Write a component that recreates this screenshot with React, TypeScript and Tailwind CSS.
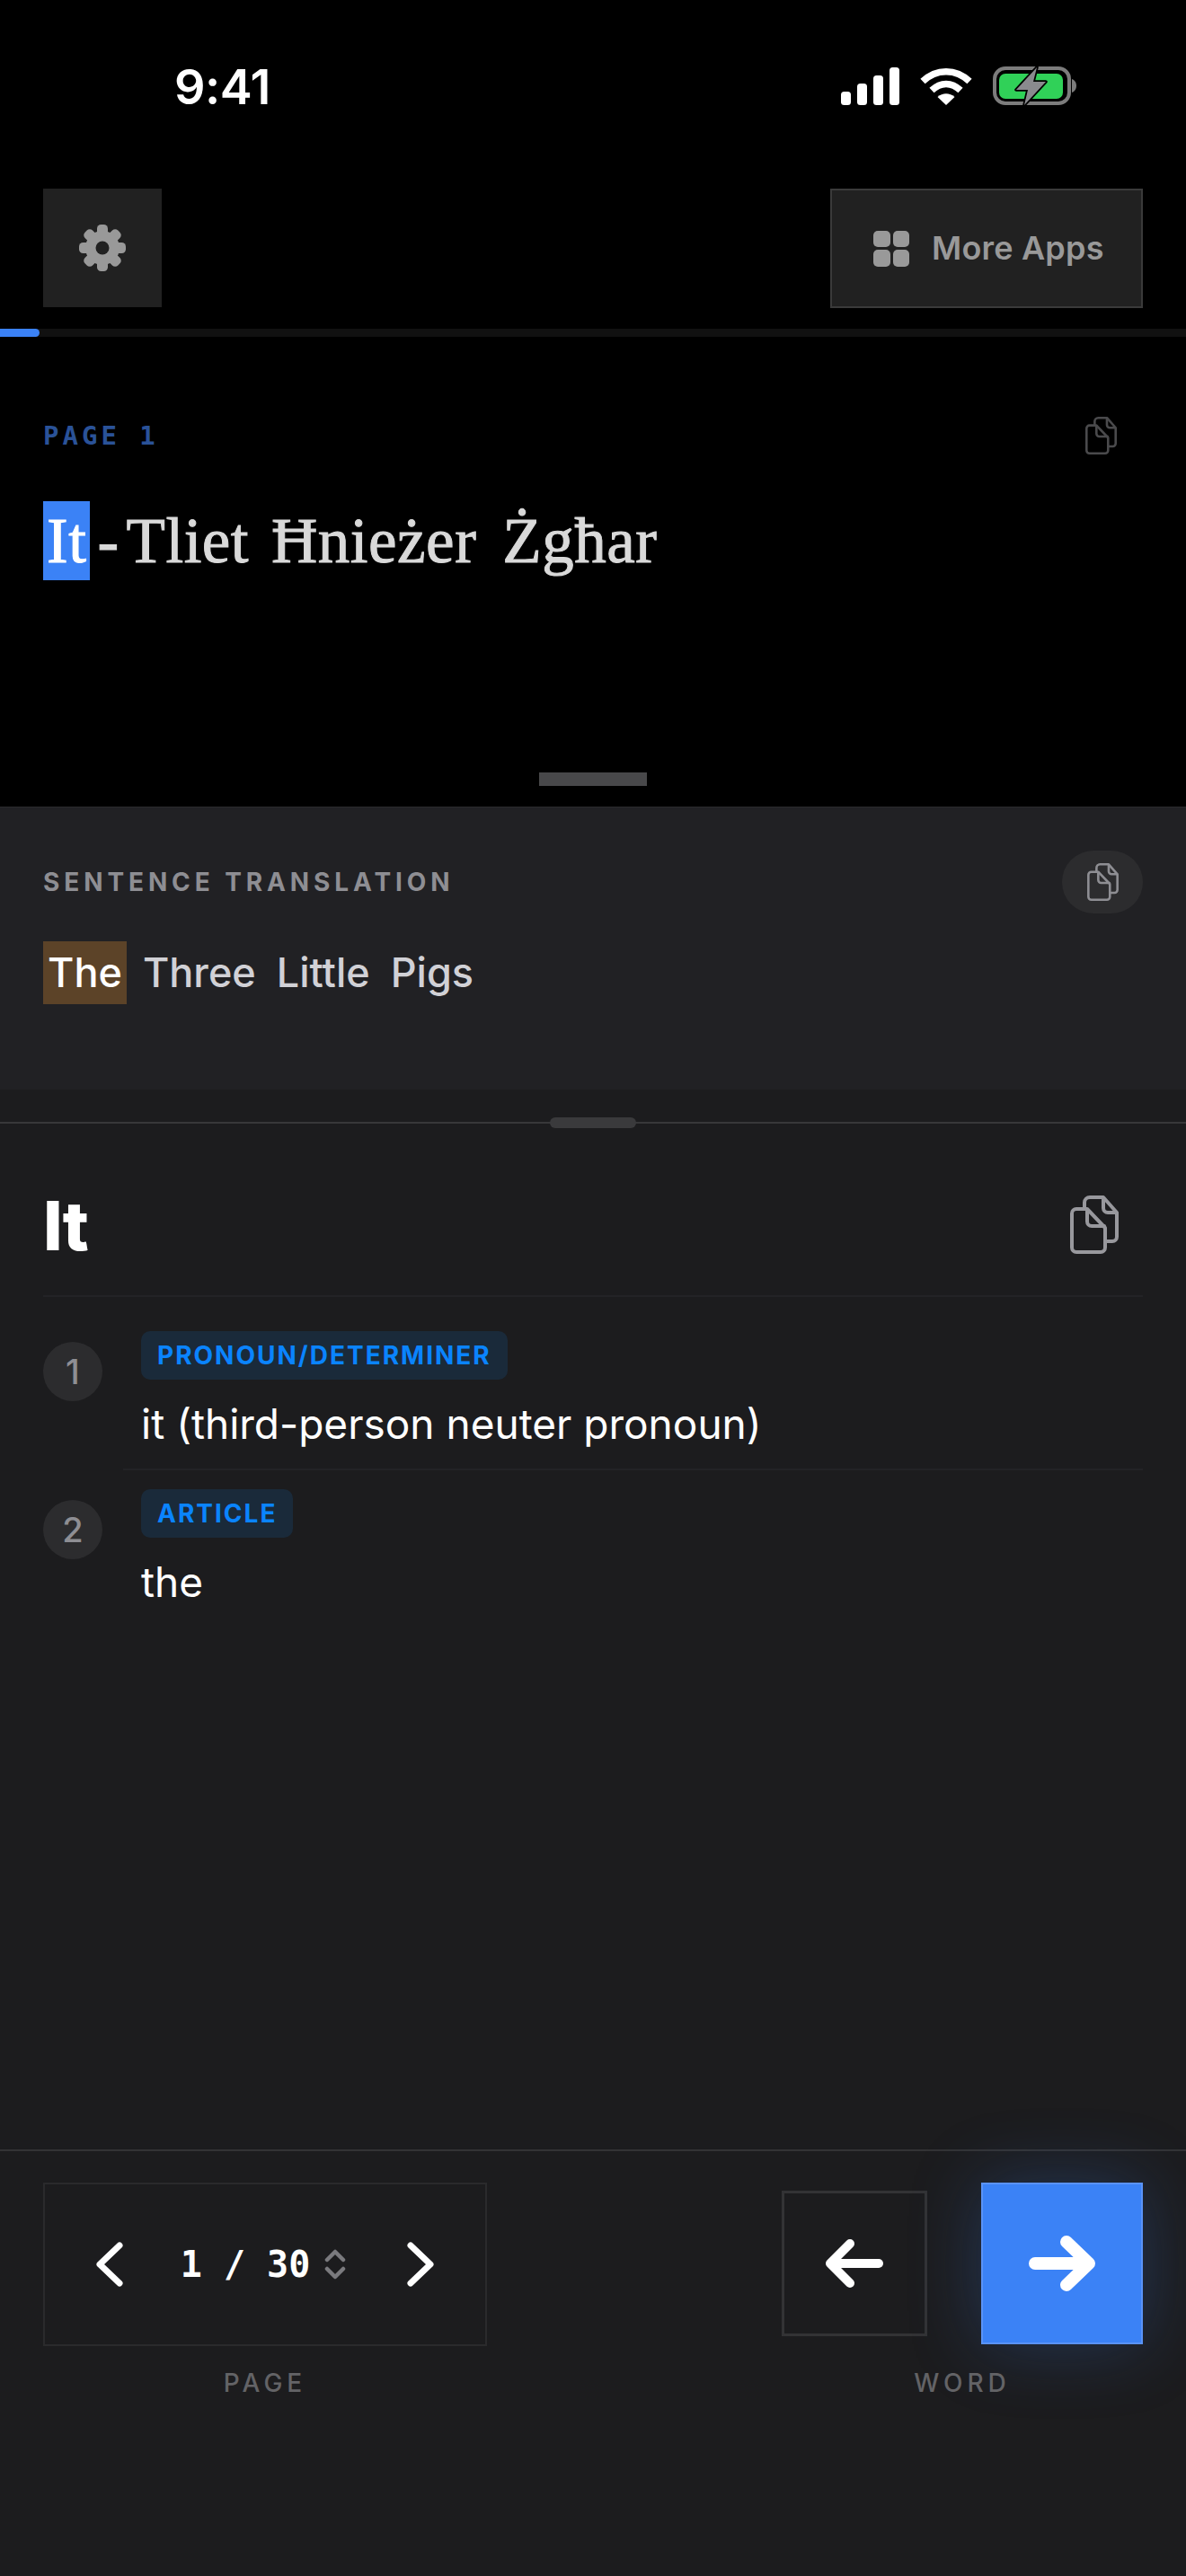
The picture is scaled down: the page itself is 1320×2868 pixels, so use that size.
import React from 'react';

const FilesIcon: React.FC<{ className?: string }> = ({ className }) => (
  <svg viewBox="0 0 54 65" fill="none" stroke="currentColor" strokeWidth="4" strokeLinecap="round" strokeLinejoin="round" className={className}>
    <path d="M16 15V8a6 6 0 0 1 6-6h15l15 17v27a5 5 0 0 1-5 5h-8" />
    <path d="M37 3v11a5 5 0 0 0 5 5h9" />
    <path d="M7 15h12l20 21v22a5 5 0 0 1-5 5H7a5 5 0 0 1-5-5V20a5 5 0 0 1 5-5Z" />
    <path d="M19 16v13a5 5 0 0 0 5 5h14" />
  </svg>
);

const GearIcon: React.FC = () => (
  <svg width="52" height="52" viewBox="0 0 52 52" fill="#999999">
    {[0, 45, 90, 135, 180, 225, 270, 315].map((deg) => (
      <rect key={deg} x="20" y="0" width="12" height="14" rx="4.5" transform={`rotate(${deg} 26 26)`} />
    ))}
    <circle cx="26" cy="26" r="19" />
    <circle cx="26" cy="26" r="7.500" fill="#212121" />
  </svg>
);

const StatusBar: React.FC = () => (
  <div className="h-[210px] pl-[194px] pr-[122px] pt-[62px] flex items-start justify-between">
    <span className="text-[54px] leading-[70px] font-semibold text-white font-['Inter',sans-serif] tracking-[-0.5px]">9:41</span>
    <div className="flex items-center gap-[23px] pt-[12px]">
      <svg width="65" height="42" viewBox="0 0 65 42" fill="white">
        <rect x="0" y="27" width="11" height="15" rx="3.5" />
        <rect x="18" y="18" width="11" height="24" rx="3.5" />
        <rect x="36" y="9" width="11" height="33" rx="3.5" />
        <rect x="54" y="0" width="11" height="42" rx="3.5" />
      </svg>
      <svg width="58" height="42" viewBox="0 0 58 42" fill="none" stroke="white" strokeWidth="7.5">
        <path d="M3 15.5C18 1 40 1 55 15.5" />
        <path d="M13 25.5C23 16 35 16 45 25.5" />
        <path d="M29 42L19.5 33C25 28 33 28 38.5 33Z" fill="white" stroke="none" />
      </svg>
      <svg width="93" height="44" viewBox="0 0 93 44" fill="none">
        <rect x="2" y="2" width="83" height="39" rx="12" stroke="#7c7c7c" strokeWidth="4" />
        <rect x="7" y="8" width="71" height="28" rx="7" fill="#30d158" />
        <path d="M88 14c3 1 5 4 5 7.500s-2 6.500-5 7.500Z" fill="#7c7c7c" />
        <path d="M49 1L26 26h13l-4 17 24-26H45Z" fill="#8a8a8e" stroke="black" strokeWidth="3.500" strokeLinejoin="round" paintOrder="stroke" />
      </svg>
    </div>
  </div>
);

const Toolbar: React.FC = () => (
  <div className="px-[48px] flex items-start justify-between h-[156px]">
    <button className="w-[132px] h-[132px] bg-[#212121] flex items-center justify-center">
      <GearIcon />
    </button>
    <button className="w-[348px] h-[133px] bg-[#212121] border-[2px] border-[#3a3a3a] flex items-center pl-[46px] gap-[25px]">
      <span className="grid grid-cols-2 gap-[3px] w-[40px] h-[40px]">
        <span className="bg-[#999999] rounded-[5px]" />
        <span className="bg-[#999999] rounded-[5px]" />
        <span className="bg-[#999999] rounded-[5px]" />
        <span className="bg-[#999999] rounded-[5px]" />
      </span>
      <span className="text-[36px] leading-[40px] font-semibold tracking-[0.2px] text-[#999999] font-['Inter',sans-serif] whitespace-nowrap -mt-[2px]">More Apps</span>
    </button>
  </div>
);

const TitlePanel: React.FC = () => (
  <div className="relative h-[532px]">
    <div className="h-[9px] bg-[#111111]">
      <div className="w-[44px] h-full bg-[#3b82f6] rounded-r-full" />
    </div>
    <div className="px-[48px] pt-[88px] flex items-center justify-between">
      <span className="text-[29px] leading-[36px] font-bold tracking-[4px] text-[#2a5298] font-['DejaVu_Sans_Mono',monospace]">PAGE 1</span>
      <FilesIcon className="w-[35px] h-[44px] mr-[29px] text-[#4a4a4c]" />
    </div>
    <div className="px-[48px] mt-[51px] flex items-center text-[71px] leading-[88px] tracking-[0.5px] [-webkit-text-stroke:1px_currentColor] font-['Liberation_Serif',serif] text-[#d9d9d9] whitespace-nowrap">
      <span className="bg-[#3b82f6] text-white px-[4px]">It</span>
      <span className="ml-[8px]">-</span>
      <span className="ml-[8px]">Tliet</span>
      <span className="ml-[25px]">Ħnieżer</span>
      <span className="ml-[29px]">Żgħar</span>
    </div>
    <div className="absolute left-[600px] bottom-[23px] w-[120px] h-[15px] bg-[#48484a]" />
  </div>
);

const SentencePanel: React.FC = () => (
  <div className="h-[315px] bg-[#212124] border-t border-[#2a2a2c] px-[48px] pt-[48px]">
    <div className="flex items-center justify-between h-[70px]">
      <span className="text-[28px] font-bold tracking-[4.9px] text-[#8e8e93] font-['Inter',sans-serif]">SENTENCE TRANSLATION</span>
      <button className="w-[90px] h-[70px] rounded-full bg-[#2c2c2e] flex items-center justify-center">
        <FilesIcon className="w-[35px] h-[42px] text-[#8e8e93]" />
      </button>
    </div>
    <div className="mt-[31px] flex text-[45px] leading-[70px] font-medium text-[#d1d1d6] font-['Inter',sans-serif] whitespace-nowrap">
      <span className="bg-[#5c4328] text-white px-[5px]">The</span>
      <span className="ml-[18px]">Three</span>
      <span className="ml-[23px]">Little</span>
      <span className="ml-[23px]">Pigs</span>
    </div>
  </div>
);

const defs = [
  { n: 1, pos: 'PRONOUN/DETERMINER', text: 'it (third-person neuter pronoun)' },
  { n: 2, pos: 'ARTICLE', text: 'the' },
];

const WordPanel: React.FC = () => (
  <div className="flex-1 bg-[#1c1c1e]">
    <div className="relative h-[38px] border-b-[2px] border-[#38383a]">
      <div className="absolute left-[612px] top-[31px] w-[96px] h-[12px] rounded-full bg-[#3a3a3c]" />
    </div>
    <div className="mx-[48px] h-[193px] border-b-[2px] border-[#232326] flex items-center justify-between">
      <span className="mt-[34px] text-[76px] font-extrabold text-white font-['Inter',sans-serif] leading-none tracking-[-1px]">It</span>
      <FilesIcon className="mt-[34px] w-[54px] h-[67px] mr-[27px] text-[#98989d]" />
    </div>
    <div className="px-[48px] pt-[38px]">
      {defs.map((d, i) => (
        <div key={d.n} className={`flex gap-[43px] ${i === 0 ? 'mb-[21px]' : ''}`}>
          <span className="mt-[12px] w-[66px] h-[66px] shrink-0 rounded-full bg-[#2c2c2e] text-[#8e8e93] text-[38px] font-medium font-['Inter',sans-serif] flex items-center justify-center">{d.n}</span>
          <div className={`flex-1 -ml-[20px] pl-[20px] ${i === 0 ? 'border-b-[2px] border-[#232326] h-[155px]' : ''}`}>
            <span className="block w-fit h-[54px] px-[18px] rounded-[10px] bg-[#1a2a3a] text-[#0a84ff] text-[28px] leading-[54px] font-bold tracking-[2px] font-['Inter',sans-serif]">{d.pos}</span>
            <p className="mt-[18px] text-[46px] leading-[62px] text-white font-['Inter',sans-serif]">{d.text}</p>
          </div>
        </div>
      ))}
    </div>
  </div>
);

const BottomNav: React.FC = () => (
  <div className="h-[475px] bg-[#1c1c1e] border-t-[2px] border-[#333335] px-[48px] pt-[35px] flex items-start justify-between">
    <div className="flex flex-col items-center">
      <div className="w-[494px] h-[182px] border-[2px] border-[#2a2a2c] flex items-center justify-between px-[56px]">
        <svg width="32" height="50" viewBox="0 0 32 50" fill="none" stroke="white" strokeWidth="7" strokeLinecap="round" strokeLinejoin="round">
          <path d="M27 4L5 25l22 21" />
        </svg>
        <div className="flex items-center gap-[16px] mr-[4px]">
          <span className="text-[40px] font-bold text-white font-['DejaVu_Sans_Mono',monospace] whitespace-nowrap">1 / 30</span>
          <svg width="24" height="34" viewBox="0 0 24 34" fill="none" stroke="#7a7a7e" strokeWidth="4.500" strokeLinecap="round" strokeLinejoin="round">
            <path d="M3 12l9-9 9 9" />
            <path d="M3 22l9 9 9-9" />
          </svg>
        </div>
        <svg width="32" height="50" viewBox="0 0 32 50" fill="none" stroke="white" strokeWidth="7" strokeLinecap="round" strokeLinejoin="round">
          <path d="M5 4l22 21L5 46" />
        </svg>
      </div>
      <span className="mt-[20px] text-[28px] font-medium tracking-[5px] text-[#636366] font-['Inter',sans-serif]">PAGE</span>
    </div>
    <div className="flex flex-col items-center">
      <div className="flex items-center gap-[60px]">
        <button className="w-[162px] h-[162px] border-[3px] border-[#333335] flex items-center justify-center">
          <svg width="64" height="54" viewBox="0 0 64 54" fill="none" stroke="white" strokeWidth="10" strokeLinecap="round" strokeLinejoin="round">
            <path d="M59 27H6" />
            <path d="M27 5L5 27l22 22" />
          </svg>
        </button>
        <button className="w-[180px] h-[180px] bg-[#3b82f6] border-[2px] border-[#5a93f7] shadow-[0_0_80px_rgba(59,130,246,0.25)] flex items-center justify-center">
          <svg width="74" height="62" viewBox="0 0 74 62" fill="none" stroke="white" strokeWidth="14" strokeLinecap="round" strokeLinejoin="round">
            <path d="M7 31h59" />
            <path d="M42 7l25 24-25 24" />
          </svg>
        </button>
      </div>
      <span className="mt-[22px] text-[28px] font-medium tracking-[5px] text-[#636366] font-['Inter',sans-serif]">WORD</span>
    </div>
  </div>
);

export default function App() {
  return (
    <div className="w-[1320px] h-[2868px] bg-[#1c1c1e] flex flex-col overflow-hidden">
      <div className="bg-black">
        <StatusBar />
        <Toolbar />
        <TitlePanel />
      </div>
      <SentencePanel />
      <WordPanel />
      <BottomNav />
    </div>
  );
}
